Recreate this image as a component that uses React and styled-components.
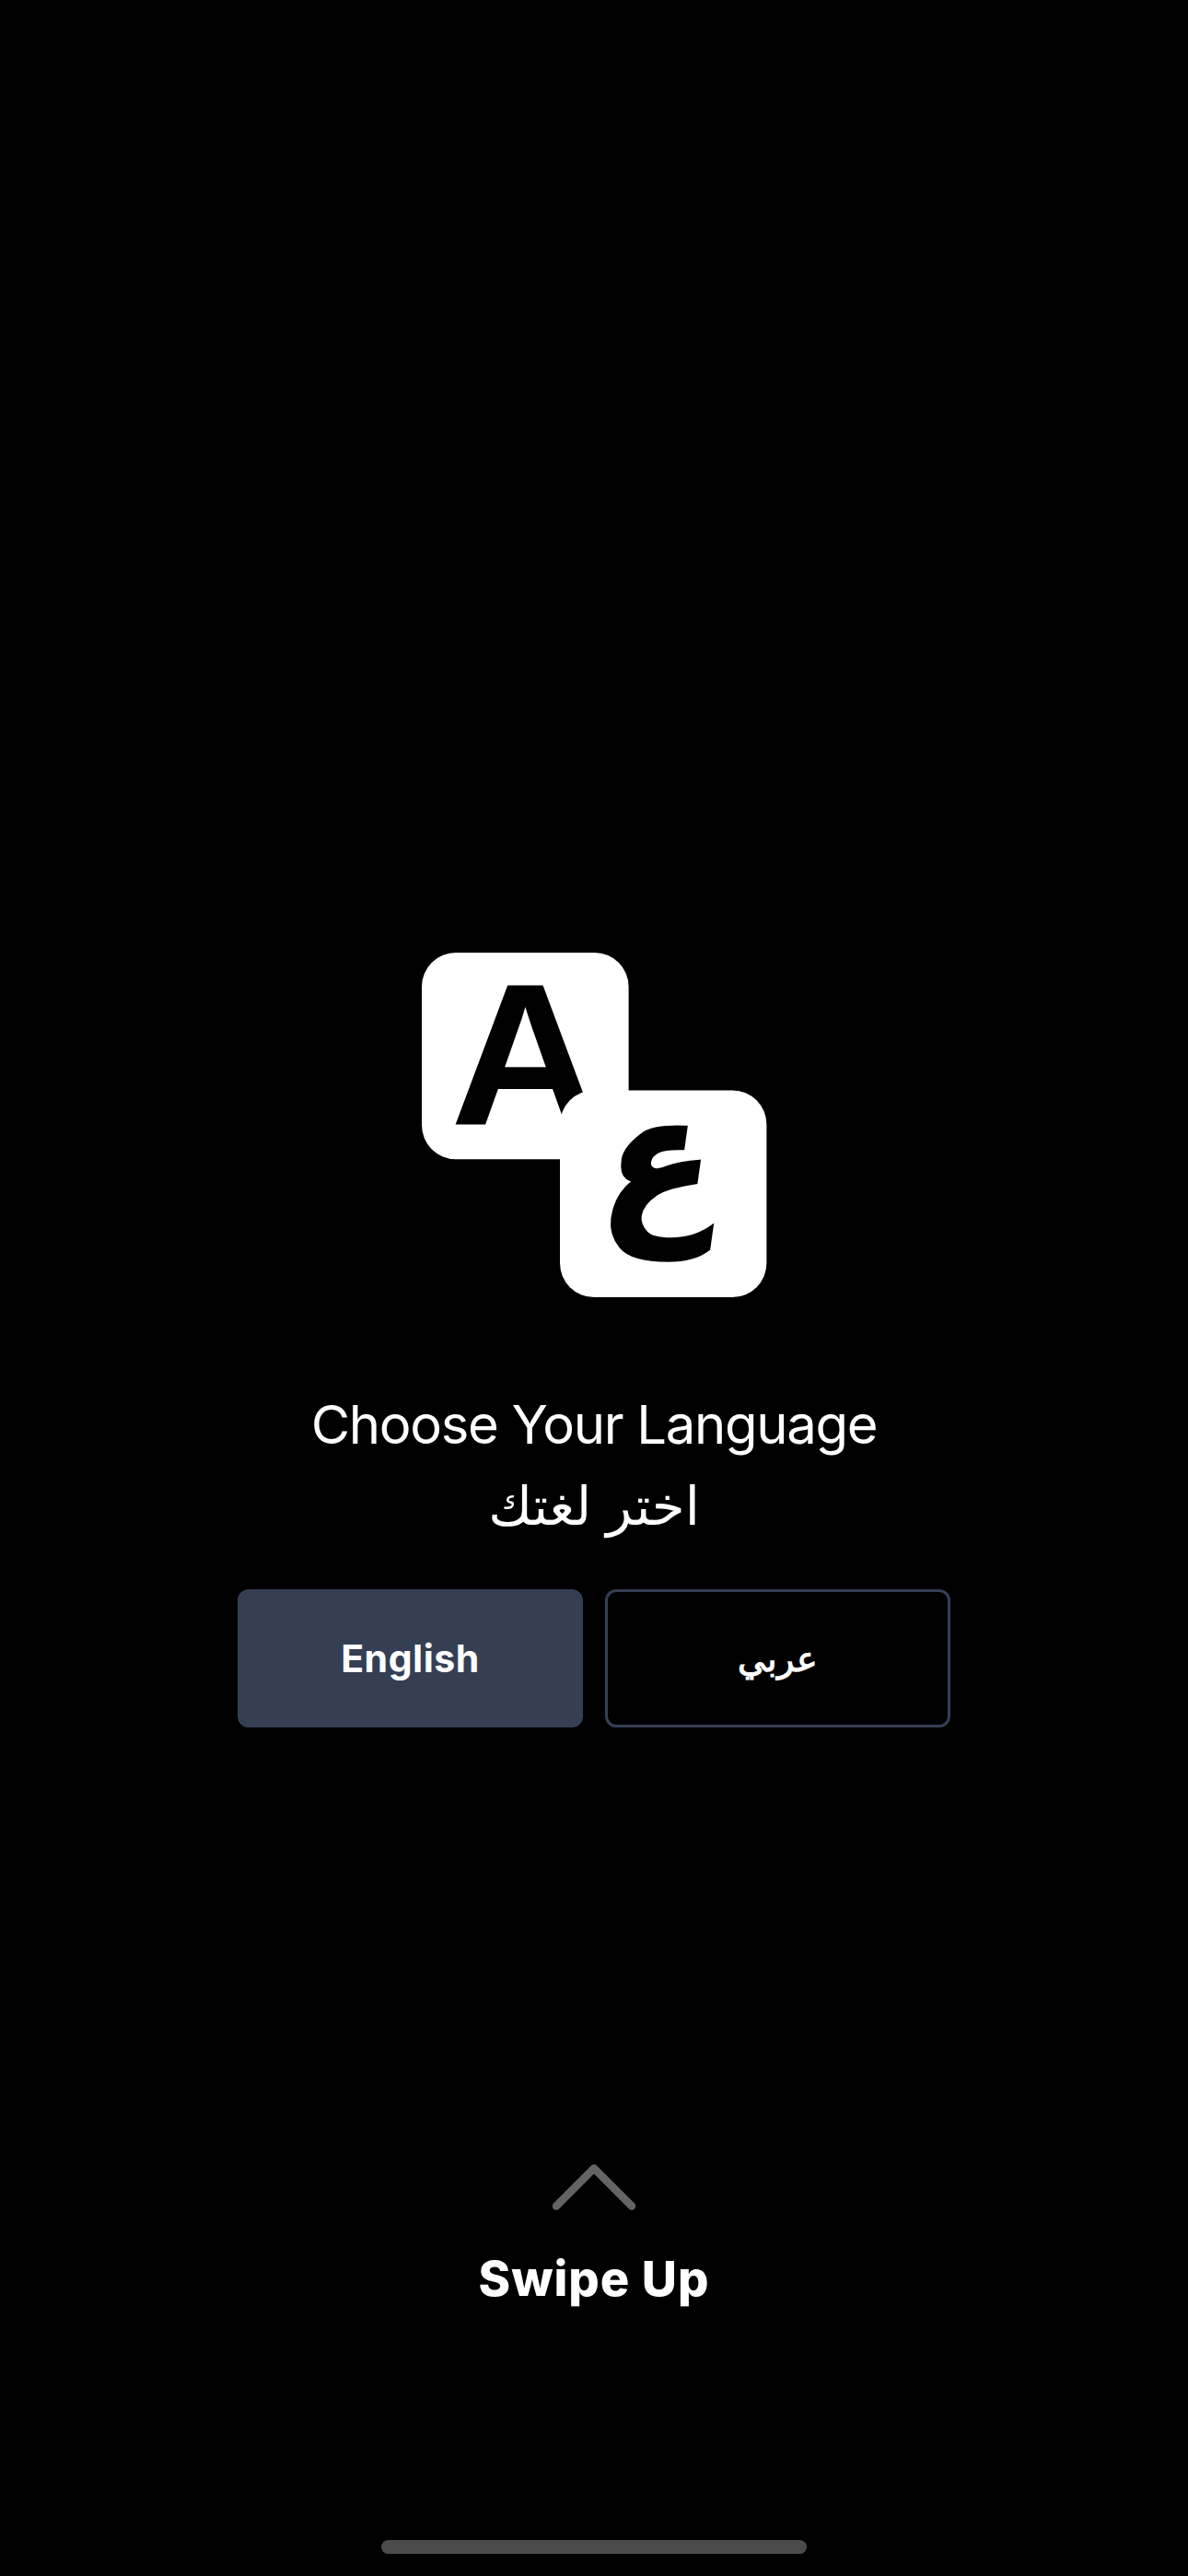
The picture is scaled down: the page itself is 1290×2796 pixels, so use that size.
import React from "react";
import styled, { createGlobalStyle } from "styled-components";

const latin = `Inter, "Noto Sans", sans-serif`;
const arabic = `"Noto Sans", "DejaVu Sans", sans-serif`;

const GlobalStyle = createGlobalStyle`
  * { box-sizing: border-box; }
  body { margin: 0; background: #000; }
`;

const Screen = styled.div`
  width: 1290px;
  height: 2796px;
  display: flex;
  flex-direction: column;
  align-items: center;
  overflow: hidden;
  background: #000;
  color: #fff;
  font-family: ${latin};
`;

const Chooser = styled.main`
  display: flex;
  flex-direction: column;
  align-items: center;
  padding-top: 1034px;
`;

const Logo = styled.svg`
  display: block;
  width: 375px;
  height: 375px;
`;

const Title = styled.h1`
  margin: 101px 0 0;
  font-size: 58px;
  line-height: 72px;
  font-weight: 400;
  letter-spacing: -1.3px;
  white-space: nowrap;
`;

const ArabicTitle = styled(Title)`
  margin-top: 15px;
  font-family: ${arabic};
  letter-spacing: 0;
  word-spacing: 1px;
`;

const Buttons = styled.div`
  display: flex;
  gap: 24px;
  margin-top: 56px;
`;

const LanguageButton = styled.button`
  display: flex;
  align-items: center;
  justify-content: center;
  width: 375px;
  height: 150px;
  padding: 0;
  border: 3px solid #353f54;
  border-radius: 12px;
  background: ${(p) => (p.$filled ? "#353f54" : "transparent")};
  color: #fff;
  font-family: ${(p) => (p.$arabic ? `"Noto Sans", sans-serif` : latin)};
  font-size: ${(p) => (p.$arabic ? 38 : 41)}px;
  font-stretch: ${(p) => (p.$arabic ? "condensed" : "normal")};
  font-weight: 700;
  letter-spacing: ${(p) => (p.$arabic ? 0 : 0.5)}px;
`;

const ButtonLabel = styled.span`
  padding-bottom: ${(p) => (p.$raised ? 2 : 0)}px;
`;

const SwipeHint = styled.footer`
  display: flex;
  flex-direction: column;
  align-items: center;
  margin-top: 474px;
`;

const Chevron = styled.svg`
  display: block;
  width: 90px;
  height: 50px;
`;

const SwipeLabel = styled.div`
  margin-top: 42px;
  font-size: 52.5px;
  line-height: 64px;
  font-weight: 800;
  letter-spacing: 1px;
`;

const HomeIndicator = styled.div`
  width: 462px;
  height: 15px;
  margin-top: auto;
  margin-bottom: 24px;
  border-radius: 8px;
  background: #4b4b4b;
`;

function LanguageLogo() {
  return (
    <Logo viewBox="0 0 375 375">
      <rect x="0" y="0" width="224.6" height="224.3" rx="37" fill="#fff" />
      <text
        transform="translate(31 187) scale(1.03 1)"
        fontFamily="Liberation Sans, sans-serif"
        fontWeight="700"
        fontSize="219"
        fill="#000"
      >
        A
      </text>
      <rect x="150" y="149.5" width="224.4" height="224.5" rx="37" fill="#fff" />
      <text
        transform="translate(191.6 287.7) skewX(-8) scale(0.87 0.95)"
        fontFamily="DejaVu Sans, sans-serif"
        fontWeight="700"
        fontSize="200"
        fill="#000"
        stroke="#000"
        strokeWidth="3"
      >
        ع
      </text>
    </Logo>
  );
}

export default function App() {
  return (
    <>
      <GlobalStyle />
      <Screen>
        <Chooser>
          <LanguageLogo />
          <Title>Choose Your Language</Title>
          <ArabicTitle as="h2" lang="ar" dir="rtl">اختر لغتك</ArabicTitle>
          <Buttons>
            <LanguageButton $filled>
              <ButtonLabel>English</ButtonLabel>
            </LanguageButton>
            <LanguageButton $arabic lang="ar">
              <ButtonLabel $raised>عربي</ButtonLabel>
            </LanguageButton>
          </Buttons>
        </Chooser>
        <SwipeHint>
          <Chevron viewBox="0 0 90 50">
            <path
              d="M4 45.5 45 4.5 86 45.5"
              fill="none"
              stroke="#646464"
              strokeWidth="8.5"
              strokeLinecap="round"
              strokeLinejoin="round"
            />
          </Chevron>
          <SwipeLabel>Swipe Up</SwipeLabel>
        </SwipeHint>
        <HomeIndicator />
      </Screen>
    </>
  );
}
